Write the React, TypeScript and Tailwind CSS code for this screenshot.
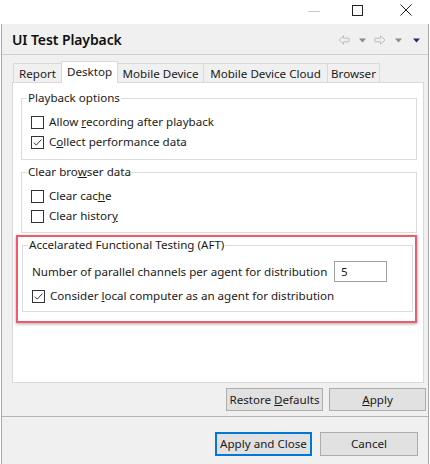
import React from "react";

function Check({ checked }: { checked?: boolean }) {
  return (
    <span className="w-[13px] h-[13px] border border-[#333333] bg-white flex items-center justify-center shrink-0">
      {checked && (
        <svg width="11" height="11" viewBox="0 0 11 11">
          <path d="M1.8 5.6 L4.3 8.1 L9.4 2.6" fill="none" stroke="#333" strokeWidth="1" />
        </svg>
      )}
    </span>
  );
}

function Row({ checked, children }: { checked?: boolean; children: React.ReactNode }) {
  return (
    <div className="h-[20px] flex items-center gap-[5px]">
      <Check checked={checked} />
      <span className="leading-[16px] whitespace-nowrap">{children}</span>
    </div>
  );
}

function Tab({ label, w, selected }: { label: string; w: string; selected?: boolean }) {
  if (selected) {
    return (
      <div className={`${w} h-[22px] -ml-px bg-white border border-b-0 border-[#d9d9d9] relative z-10 flex items-start justify-center pt-[2px] leading-[16px]`}>
        {label}
      </div>
    );
  }
  return (
    <div className={`${w} h-[20px] -ml-px bg-[#f0f0f0] border border-b-0 border-[#d9d9d9] flex items-center justify-center leading-[16px]`}>
      {label}
    </div>
  );
}

function Arrow({ dir }: { dir: "l" | "r" }) {
  return (
    <svg width="12" height="10" viewBox="0 0 12 10">
      {dir === "l" ? (
        <path d="M1 5 L5.5 0.8 V3.2 H11 V6.8 H5.5 V9.2 Z" fill="none" stroke="#bdbdbd" strokeWidth="1" />
      ) : (
        <path d="M11 5 L6.5 0.8 V3.2 H1 V6.8 H6.5 V9.2 Z" fill="none" stroke="#bdbdbd" strokeWidth="1" />
      )}
    </svg>
  );
}

function Tri({ color }: { color: string }) {
  return (
    <svg width="7" height="5" viewBox="0 0 7 5">
      <path d="M0 0.5 H7 L3.5 4.5 Z" fill={color} />
    </svg>
  );
}

export default function App() {
  return (
    <div className="w-[430px] h-[464px] bg-white overflow-hidden font-['Noto_Sans',sans-serif] text-[11.6px] text-[#1a1a1a] flex flex-col">
      {/* title bar */}
      <div className="h-[24px] flex items-center justify-end shrink-0">
        <svg width="12" height="2" viewBox="0 0 12 2" className="mr-[32px]">
          <rect x="0" y="0" width="12" height="1" fill="#c8c8c8" />
        </svg>
        <svg width="11" height="11" viewBox="0 0 11 11" className="mr-[37px] mb-[4px]">
          <rect x="0.5" y="0.5" width="10" height="10" fill="none" stroke="#222" strokeWidth="1" />
        </svg>
        <svg width="12" height="12" viewBox="0 0 12 12" className="mr-[18px] mb-[4px]">
          <path d="M0.5 0.5 L11.5 11.5 M11.5 0.5 L0.5 11.5" stroke="#222" strokeWidth="1" />
        </svg>
      </div>

      {/* window body */}
      <div className="ml-[1px] w-[428px] flex-1 bg-[#f0f0f0] border-l border-r border-[#a8a8a8] flex flex-col">
        {/* header */}
        <div className="h-[31px] border-b border-[#d0d0d0] flex items-center justify-between pl-[10px] pr-[8px] shrink-0">
          <span className="text-[14px] font-semibold leading-[20px] tracking-[-0.1px] text-[#111] pt-[2px]">UI Test Playback</span>
          <div className="flex items-center pt-[2px]">
            <Arrow dir="l" />
            <span className="ml-[9px]"><Tri color="#8a8a8a" /></span>
            <span className="ml-[8px]"><Arrow dir="r" /></span>
            <span className="ml-[9px]"><Tri color="#8a8a8a" /></span>
            <span className="ml-[11px]"><Tri color="#3a1f6b" /></span>
          </div>
        </div>

        {/* tabs */}
        <div className="flex items-end ml-[12px] mt-[6px] h-[22px] shrink-0 -mb-px">
          <Tab label="Report" w="w-[49px]" />
          <Tab label="Desktop" w="w-[57px]" selected />
          <Tab label="Mobile Device" w="w-[87px]" />
          <Tab label="Mobile Device Cloud" w="w-[125px]" />
          <Tab label="Browser" w="w-[53px]" />
        </div>

        {/* panel */}
        <div className="ml-[10px] mr-[4px] h-[301px] bg-white border border-[#d9d9d9] shrink-0 flex flex-col pt-[7px] pl-[8px] pr-[6px]">
          <fieldset className="border border-[#dcdcdc] p-0 m-0">
            <legend className="ml-[5px] px-[1px] leading-[16px]">Playback options</legend>
            <div className="pl-[9px] pt-[6px] pb-[7px]">
              <Row>Allow <u>r</u>ecording after playback</Row>
              <Row checked>C<u>o</u>llect performance data</Row>
            </div>
          </fieldset>

          <fieldset className="border border-[#dcdcdc] p-0 mt-[4px]">
            <legend className="ml-[5px] px-[1px] leading-[16px]">Clear bro<u>w</u>ser data</legend>
            <div className="pl-[9px] pt-[6px] pb-[6px]">
              <Row>Clear cac<u>h</u>e</Row>
              <Row>Clear histor<u>y</u></Row>
            </div>
          </fieldset>

          <div className="-ml-[5px] mt-[2px] border-2 border-[#ef5b6b] shadow-[0_1px_3px_rgba(0,0,0,0.35)] pl-[4px] pr-[2px] pb-[9px]">
            <fieldset className="border border-[#dcdcdc] p-0">
              <legend className="ml-[5px] px-[1px] leading-[16px]">Accelarated Functional Testing (AFT)</legend>
              <div className="pl-[9px] pt-[8px] pb-[5px]">
                <div className="h-[21px] flex items-center">
                  <span className="w-[302px] leading-[16px] whitespace-nowrap">Number of parallel channels per agent for distribution</span>
                  <div className="w-[53px] h-[21px] border border-[#a0a0a0] bg-white flex items-center pl-[6px] leading-[16px]">5</div>
                </div>
                <div className="mt-[4px]">
                  <Row checked>Consider <u>l</u>ocal computer as an agent for distribution</Row>
                </div>
              </div>
            </fieldset>
          </div>
        </div>

        {/* restore / apply */}
        <div className="flex justify-end gap-[6px] pr-[2px] mt-[5px] shrink-0">
          <button className="w-[97px] h-[23px] bg-[#e1e1e1] border border-[#adadad] leading-[16px]">
            Restore <u>D</u>efaults
          </button>
          <button className="w-[97px] h-[23px] bg-[#e1e1e1] border border-[#adadad] leading-[16px]">
            <u>A</u>pply
          </button>
        </div>

        <div className="mt-[5px] h-px bg-[#b4b4b4] shrink-0" />

        {/* bottom buttons */}
        <div className="flex justify-end gap-[8px] pr-[10px] mt-[15px] shrink-0">
          <button className="w-[97px] h-[24px] bg-[#e1e1e1] border-2 border-[#0078d7] leading-[16px]">
            Apply and Close
          </button>
          <button className="w-[98px] h-[24px] bg-[#e1e1e1] border border-[#adadad] leading-[16px]">
            Cancel
          </button>
        </div>
      </div>
    </div>
  );
}
